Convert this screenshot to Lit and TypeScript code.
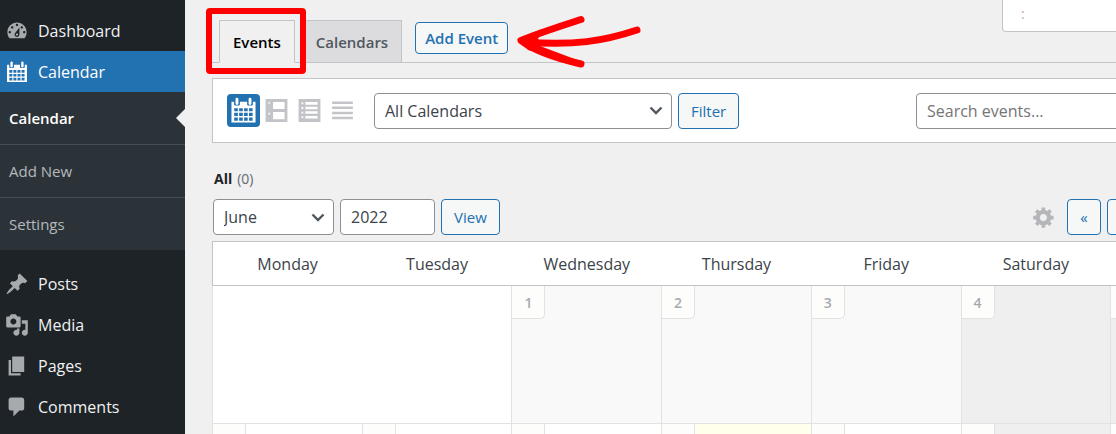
import { LitElement, html, css, svg } from "lit";
import { customElement } from "lit/decorators.js";
import { classMap } from "lit/directives/class-map.js";

const calendarCells = [8.4, 11.6, 14.8]
  .flatMap((y) => [3.6, 7, 10.4, 13.8].map((x) => `M${x} ${y}v2.200h2.500v-2.200z`))
  .join("");

const PATHS: Record<string, string> = {
  dashboard:
    "M3.76 16h12.48c1.1-1.37 1.76-3.11 1.76-5 0-4.42-3.58-8-8-8s-8 3.58-8 8c0 1.89.66 3.63 1.76 5zM10 4c.55 0 1 .45 1 1s-.45 1-1 1-1-.45-1-1 .45-1 1-1zM6 6c.55 0 1 .45 1 1s-.45 1-1 1-1-.45-1-1 .45-1 1-1zm8 0c.55 0 1 .45 1 1s-.45 1-1 1-1-.45-1-1 .45-1 1-1zm-5.37 5.55L12 7v6c0 1.1-.9 2-2 2s-2-.9-2-2c0-.57.24-1.08.63-1.45zM4 10c.55 0 1 .45 1 1s-.45 1-1 1-1-.45-1-1 .45-1 1-1zm12 0c.55 0 1 .45 1 1s-.45 1-1 1-1-.45-1-1 .45-1 1-1zm-5 3c0-.55-.45-1-1-1s-1 .45-1 1 .45 1 1 1 1-.45 1-1z",
  calendar:
    "M1.700 4H3.500v1.800q0 .8.8.8h2.400q.8 0 .8-.8V4h5v1.800q0 .8.8.8h2.400q.8 0 .8-.8V4h1.800v14.300H1.700zM4.500 2.200a1 1 0 0 1 2 0v3a1 1 0 0 1-2 0zM13.500 2.200a1 1 0 0 1 2 0v3a1 1 0 0 1-2 0z" +
    calendarCells,
  pin: "M10.44 3.02l1.82-1.82 6.36 6.35-1.83 1.82c-1.05-.68-2.48-.57-3.41.36l-.75.75c-.92.93-1.04 2.35-.35 3.41l-1.83 1.82-2.41-2.41-2.8 2.79c-.42.42-3.38 2.71-3.8 2.29s1.86-3.39 2.28-3.81l2.79-2.79L4.1 9.36l1.83-1.82c1.05.69 2.48.57 3.4-.36l.75-.75c.93-.92 1.05-2.35.36-3.41z",
  media:
    "M13 11V4c0-.55-.45-1-1-1h-1.67L9 1H5L3.67 3H2c-.55 0-1 .45-1 1v7c0 .55.45 1 1 1h10c.55 0 1-.45 1-1zM7 4.500c1.38 0 2.500 1.120 2.500 2.500S8.380 9.500 7 9.500 4.500 8.380 4.500 7 5.620 4.500 7 4.500zM14 6h5v10.500c0 1.380-1.120 2.500-2.500 2.500S14 17.880 14 16.500s1.120-2.500 2.500-2.500c.17 0 .34.02.5.05V9h-3V6zm-4 8.050V13h2v3.500c0 1.380-1.120 2.500-2.500 2.500S7 17.880 7 16.500 8.120 14 9.500 14c.17 0 .34.02.5.05z",
  pages: "M6 15V2h10v13H6zm-1 1h8v2H3V5h2v11z",
  comments:
    "M5 2h9c1.1 0 2 .9 2 2v7c0 1.1-.9 2-2 2h-2l-5 5v-5H5c-1.1 0-2-.9-2-2V4c0-1.1.9-2 2-2z",
  gear: "M18 12h-2.18c-.17.7-.44 1.35-.81 1.93l1.54 1.54-2.1 2.1-1.54-1.54c-.58.36-1.23.63-1.91.79V19H8v-2.18c-.68-.16-1.33-.43-1.91-.79l-1.54 1.54-2.12-2.12 1.54-1.54c-.36-.58-.63-1.23-.79-1.91H1V9.03h2.17c.16-.7.44-1.35.8-1.94L2.43 5.55l2.1-2.1 1.54 1.54c.58-.37 1.24-.64 1.93-.81V2h3v2.18c.68.16 1.33.43 1.91.79l1.54-1.54 2.12 2.12-1.54 1.54c.36.59.64 1.24.8 1.94H18V12zm-8.5 1.5c1.66 0 3-1.34 3-3s-1.34-3-3-3-3 1.34-3 3 1.34 3 3 3z",
  week: "M.5 0h19v20H.5zM3 2.800v1.400h1.400V2.800zM7 2.500V8.700h10V2.500zM3 12v1.400h1.400V12zM7 11.300v6.200h10v-6.200z",
  agenda:
    "M.5 0h19v20H.5zM3 3v1.600h1.600V3zM6.400 2.700v2.200H17V2.700zM3 7v1.600h1.600V7zM6.400 6.700v2.200H17V6.700zM3 11v1.600h1.600V11zM6.400 10.700v2.200H17v-2.200zM3 15v1.600h1.600V15zM6.400 14.700v2.200H17v-2.200z",
  lines: "M1 2.200h18v2.100H1zM1 6.600h18v2.100H1zM1 11.100h18v2.100H1zM1 15.500h18v2.100H1z",
};

const icon = (name: string) => html`
  <svg viewBox="0 0 20 20" aria-hidden="true">
    ${svg`<path fill="currentColor" fill-rule="evenodd" d=${PATHS[name]}></path>`}
  </svg>
`;

const chevron = html`
  <svg class="chevron" viewBox="0 0 14 9" aria-hidden="true">
    <path d="M1.500 1.500 7 7l5.500-5.500" fill="none" stroke="#50575e" stroke-width="2.400" />
  </svg>
`;

@customElement("admin-menu")
export class AdminMenu extends LitElement {
  static styles = css`
    :host {
      display: block;
      background: #1d2327;
      color: #f0f0f1;
      padding-top: 10px;
    }
    a {
      color: inherit;
      text-decoration: none;
      display: flex;
      align-items: center;
    }
    .item {
      height: 41px;
      gap: 9px;
      padding-left: 5px;
      font-size: 16px;
    }
    .item svg {
      width: 24px;
      height: 24px;
      color: #a7aaad;
    }
    .current {
      background: #2271b1;
      color: #fff;
    }
    .current svg {
      color: #fff;
    }
    .sub {
      background: #2c3338;
      color: #b4b9be;
      margin-bottom: 13px;
    }
    .sub a {
      height: 53px;
      padding-left: 9px;
      font-size: 15px;
      box-sizing: border-box;
      position: relative;
    }
    .sub a + a {
      border-top: 1px solid #464d54;
    }
    .sub .here {
      height: 52px;
      color: #fff;
      font-weight: 600;
    }
    .here::after {
      content: "";
      position: absolute;
      right: 0;
      top: 17px;
      border: 9px solid transparent;
      border-right-color: #f0f0f1;
      border-left: 0;
    }
  `;

  private item(name: string, label: string, current = false) {
    return html`<a href="#" class=${classMap({ item: true, current })}>${icon(name)}<span>${label}</span></a>`;
  }

  render() {
    return html`
      <nav aria-label="Admin menu">
        ${this.item("dashboard", "Dashboard")} ${this.item("calendar", "Calendar", true)}
        <div class="sub">
          <a href="#" class="here">Calendar</a>
          <a href="#">Add New</a>
          <a href="#">Settings</a>
        </div>
        ${this.item("pin", "Posts")} ${this.item("media", "Media")} ${this.item("pages", "Pages")}
        ${this.item("comments", "Comments")}
      </nav>
    `;
  }
}

@customElement("month-grid")
export class MonthGrid extends LitElement {
  static styles = css`
    :host {
      display: block;
    }
    table {
      width: 100%;
      table-layout: fixed;
      border-collapse: collapse;
      background: #fff;
      border: 1px solid #c3c4c7;
    }
    th {
      height: 43px;
      padding: 0;
      font-size: 16px;
      font-weight: 400;
      color: #3c434a;
      border-bottom: 1px solid #c3c4c7;
    }
    td {
      height: 137px;
      padding: 0;
      vertical-align: top;
      border: 1px solid #e2e2e3;
    }
    .past {
      background: #f9f9f9;
    }
    .weekend {
      background: #efeff0;
    }
    .today {
      background: #ffffeb;
    }
    .date {
      width: 32px;
      height: 32px;
      display: grid;
      place-items: center;
      background: #fdfdfb;
      border: solid #e2e2e3;
      border-width: 0 1px 1px 0;
      border-bottom-right-radius: 5px;
      font-size: 14px;
      font-weight: 600;
      color: #a7aaad;
    }
  `;

  private day(n: number, kind = "") {
    return html`<td class=${kind}><div class="date">${n}</div></td>`;
  }

  render() {
    const names = ["Monday", "Tuesday", "Wednesday", "Thursday", "Friday", "Saturday", "Sunday"];
    return html`
      <table>
        <thead>
          <tr>
            ${names.map((n) => html`<th scope="col">${n}</th>`)}
          </tr>
        </thead>
        <tbody>
          <tr>
            <td colspan="2"></td>
            ${this.day(1, "past")} ${this.day(2, "past")} ${this.day(3, "past")} ${this.day(4, "weekend")}
            ${this.day(5, "weekend")}
          </tr>
          <tr>
            ${this.day(6)} ${this.day(7)} ${this.day(8)} ${this.day(9, "today")} ${this.day(10)}
            ${this.day(11, "weekend")} ${this.day(12, "weekend")}
          </tr>
        </tbody>
      </table>
    `;
  }
}

@customElement("app-root")
export class AppRoot extends LitElement {
  static styles = css`
    :host {
      display: grid;
      grid-template-columns: 185px minmax(0, 1fr);
      height: 100vh;
      overflow: hidden;
      position: relative;
      background: #f0f0f1;
      color: #3c434a;
      font-family: "Segoe UI", "Open Sans", "Noto Sans", sans-serif;
      font-size: 16px;
    }
    main {
      margin: 0 -145px 0 27px;
    }
    button,
    input,
    select {
      font-family: inherit;
      box-sizing: border-box;
      margin: 0;
    }
    .header {
      display: flex;
      align-items: flex-end;
      height: 62px;
      padding-left: 7px;
      border-bottom: 1px solid #c3c4c7;
    }
    .tab {
      box-sizing: border-box;
      height: 43px;
      margin-bottom: -1px;
      padding: 0 13px;
      display: flex;
      align-items: center;
      border: 1px solid #c3c4c7;
      background: #dcdcde;
      color: #50575e;
      font-size: 15px;
      font-weight: 600;
      text-decoration: none;
      margin-right: 7px;
      position: relative;
    }
    .tab.active {
      background: #f0f0f1;
      border-bottom-color: #f0f0f1;
      color: #000;
    }
    .marker {
      position: absolute;
      inset: -13px -12px -12px -14px;
      border: 6px solid #f00;
      border-radius: 4px;
      z-index: 1;
    }
    .btn {
      border: 1px solid #2271b1;
      border-radius: 4px;
      background: #f6f7f7;
      color: #2271b1;
      height: 36px;
      padding: 0 12px;
      font-size: 15px;
    }
    .add {
      height: 32px;
      padding: 0 9px;
      font-weight: 600;
      margin: 0 0 8px 6px;
    }
    .screen {
      align-self: flex-start;
      box-sizing: border-box;
      margin-left: auto;
      width: 259px;
      height: 32px;
      padding: 4px 0 0 18px;
      background: #fff;
      border: 1px solid #c3c4c7;
      border-top: 0;
      border-radius: 0 0 4px 4px;
      color: #c8a98c;
      font-size: 14px;
    }
    .panel {
      display: flex;
      align-items: center;
      height: 63px;
      margin-top: 15px;
      padding: 0 14px;
      background: #fff;
      border: 1px solid #c3c4c7;
    }
    .views {
      display: flex;
      margin-right: 15px;
    }
    .view {
      width: 33px;
      height: 33px;
      padding: 5px;
      border: 0;
      border-radius: 4px;
      background: none;
      color: #c3c4c7;
    }
    .view svg {
      display: block;
      width: 23px;
      height: 23px;
    }
    .view.on {
      background: #2271b1;
      color: #fff;
      padding: 2px;
    }
    .view.on svg {
      width: 29px;
      height: 29px;
    }
    .select {
      display: grid;
      align-items: center;
      margin-right: 6px;
    }
    .select > * {
      grid-area: 1 / 1;
    }
    .chevron {
      width: 14px;
      height: 9px;
      justify-self: end;
      margin-right: 9px;
      pointer-events: none;
    }
    select,
    input {
      appearance: none;
      height: 36px;
      padding: 0 10px;
      border: 1px solid #8c8f94;
      border-radius: 4px;
      background: #fff;
      color: #3c434a;
      font-size: 16px;
    }
    .calendars {
      width: 298px;
    }
    .month {
      width: 121px;
    }
    .year {
      width: 95px;
      margin-right: 6px;
    }
    .search {
      width: 252px;
      margin: 0 6px 0 auto;
    }
    .search::placeholder {
      color: #757575;
      opacity: 1;
    }
    .go {
      width: 72px;
    }
    .counts {
      display: flex;
      gap: 5px;
      height: 20px;
      align-items: center;
      margin: 25px 0 11px 2px;
      font-size: 14px;
      color: #646970;
    }
    .counts a {
      color: #1d2327;
      font-weight: 700;
      text-decoration: none;
    }
    .bar {
      display: flex;
      align-items: center;
      margin-bottom: 6px;
      padding-left: 1px;
    }
    .gear {
      margin: 0 11px 0 auto;
      padding: 0;
      border: 0;
      background: none;
      color: #b4b6b9;
    }
    .gear svg {
      display: block;
      width: 24px;
      height: 24px;
    }
    .pager {
      display: flex;
      gap: 6px;
    }
    .pager .btn {
      width: 34px;
      padding: 0;
    }
    .pager .now {
      width: 74px;
    }
    .arrow {
      position: absolute;
      left: 516px;
      top: 14px;
      width: 126px;
      height: 56px;
    }
  `;

  render() {
    return html`
      <admin-menu></admin-menu>
      <main>
        <div class="header">
          <a class="tab active" href="#">Events<span class="marker"></span></a>
          <a class="tab" href="#">Calendars</a>
          <button class="btn add" type="button">Add Event</button>
          <div class="screen">:</div>
        </div>

        <div class="panel">
          <div class="views">
            <button class="view on" type="button" aria-label="Month view">${icon("calendar")}</button>
            <button class="view" type="button" aria-label="Week view">${icon("week")}</button>
            <button class="view" type="button" aria-label="Day view">${icon("agenda")}</button>
            <button class="view" type="button" aria-label="List view">${icon("lines")}</button>
          </div>
          <div class="select">
            <select class="calendars" aria-label="Calendar">
              <option>All Calendars</option>
            </select>
            ${chevron}
          </div>
          <button class="btn" type="button">Filter</button>
          <input class="search" type="search" placeholder="Search events..." aria-label="Search events" />
          <button class="btn go" type="button">Search</button>
        </div>

        <div class="counts"><a href="#">All</a><span>(0)</span></div>

        <div class="bar">
          <div class="select">
            <select class="month" aria-label="Month">
              <option>June</option>
            </select>
            ${chevron}
          </div>
          <input class="year" type="text" value="2022" aria-label="Year" />
          <button class="btn" type="button">View</button>
          <button class="gear" type="button" aria-label="Calendar settings">${icon("gear")}</button>
          <div class="pager">
            <button class="btn" type="button">«</button>
            <button class="btn" type="button">‹</button>
            <button class="btn now" type="button">Today</button>
            <button class="btn" type="button">»</button>
          </div>
        </div>

        <month-grid></month-grid>
      </main>

      <svg class="arrow" viewBox="0 0 126 56" aria-hidden="true">
        <g fill="none" stroke="#f00" stroke-width="7" stroke-linecap="round" stroke-linejoin="round">
          <path d="M65 5.500C42 13 20 20 5 26.500c14 11 36 18 60 23.500" />
          <path d="M8 28c50 4 80-1 113-12" />
        </g>
        <path fill="#f00" d="M1.500 25 26 15l-4 10 2 7 40 15-20-2L12 36z" />
      </svg>
    `;
  }
}
